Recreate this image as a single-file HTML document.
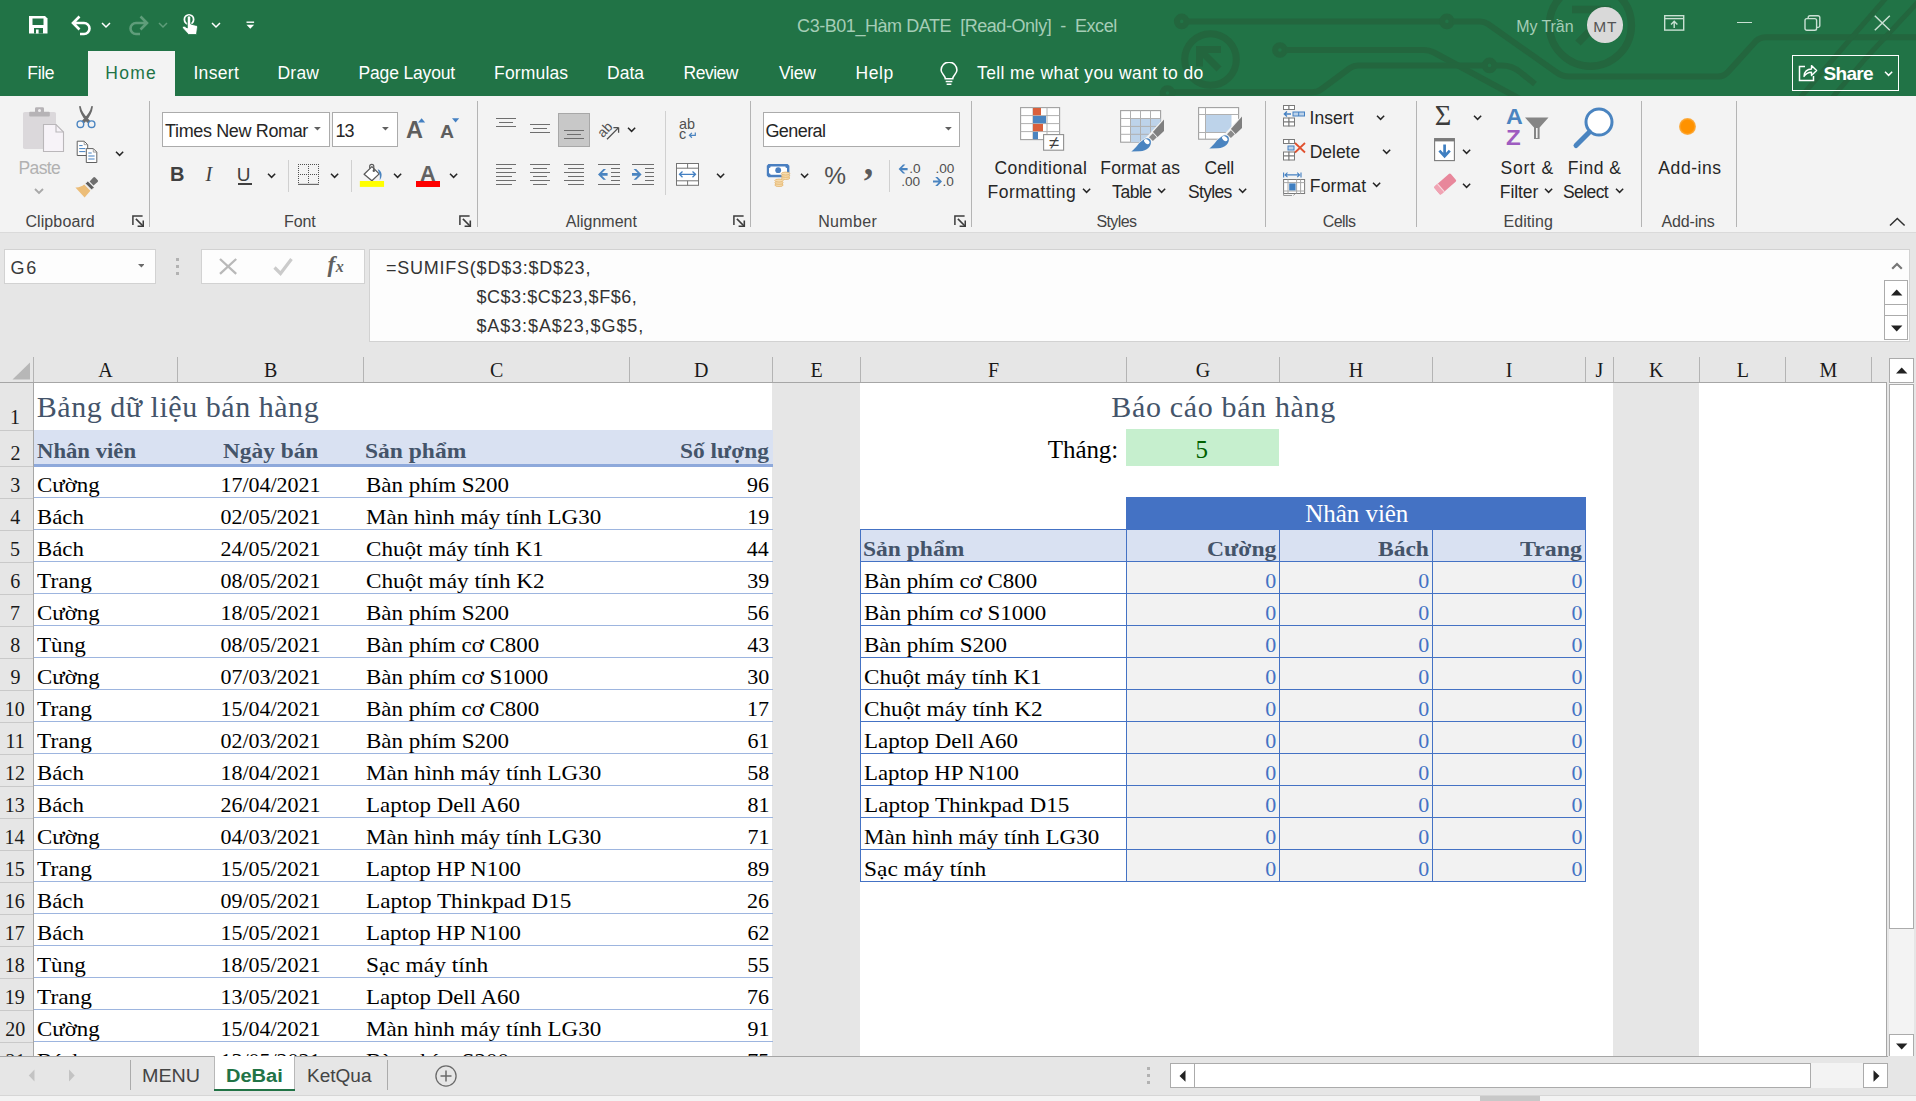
<!DOCTYPE html>
<html lang="vi"><head><meta charset="utf-8"><title>C3-B01_Hàm DATE [Read-Only] - Excel</title>
<style>
html,body{margin:0;padding:0;background:#e6e6e6;}
#app{position:relative;width:1916px;height:1101px;overflow:hidden;font-family:"Liberation Sans",sans-serif;background:#e6e6e6;}
.a{position:absolute;display:block;}
.t{position:absolute;white-space:pre;transform-origin:0 0;font-family:"Liberation Sans",sans-serif;}
.sf{font-family:"Liberation Serif",serif;}
svg text{white-space:pre;}
</style></head><body><div id="app">
<div class="a" style="left:0px;top:0px;width:1916px;height:96px;background:#217346;"></div>
<svg class="a" style="left:0px;top:0px;" width="1916" height="96" viewBox="0 0 1916 96"><g fill="none" stroke="#23663e" stroke-width="6" stroke-linejoin="round">
<circle cx="1181.7" cy="21.4" r="4.8"/><path d="M1187 21.4 H1441.5"/><circle cx="1446.9" cy="21.4" r="4.8"/><path d="M1452.3 21.4 H1480 Q1484 21.4 1488 24 L1556 72 Q1562 76.5 1569 76.5 H1718 Q1724 76.5 1728 72 L1756 41 Q1760 37.3 1766 37.3 H1916"/>
<circle cx="1279.9" cy="50" r="4.8"/><path d="M1285.3 50 H1424 Q1429 50 1434 52.5 L1520 99"/>
<circle cx="1489.5" cy="65.4" r="4.8"/><path d="M1484 65.4 H1358 Q1354 65.4 1350 68 L1321 89.5 Q1317 92.2 1312 92.2 H1173"/><path d="M1495 65.4 H1502 Q1512 65.4 1520 72 L1535 84"/>
<circle cx="1167.5" cy="93" r="4.8"/>
<circle cx="1210.5" cy="59.5" r="25.8" stroke-width="7"/><path d="M1199.5 66.5 V49.5 H1221 M1200 50 L1219 69" stroke-width="7" stroke-linejoin="miter"/>
<circle cx="1590.4" cy="25.2" r="41" stroke-width="7.4"/><path d="M1572 9.5 H1611 M1578 43 L1610 10" stroke-width="7.5"/>
<path d="M1886 -2 L1846 44 L1800 98 M1918 2 L1866 58 L1832 98" stroke-width="5"/>
</g></svg>
<svg class="a" style="left:28px;top:15px;" width="21" height="20" viewBox="0 0 21 20"><path d="M1 1 H17 L19.5 3.5 V18.5 H1 Z" fill="#ffffff"/><rect x="4.5" y="3.5" width="11" height="6.5" fill="#217346"/><rect x="6" y="13" width="9" height="5.5" fill="#217346"/><rect x="8" y="14.5" width="2.6" height="4" fill="#ffffff"/></svg>
<svg class="a" style="left:70px;top:14px;" width="23" height="22" viewBox="0 0 23 22"><path d="M9.5 2.5 L3 9 L9.5 15.5 M3.5 9 H14 a5.5 5.5 0 0 1 0 11 H10" fill="none" stroke="#ffffff" stroke-width="2.6" stroke-linejoin="miter"/></svg>
<svg class="a" style="left:100px;top:20.5px;" width="12" height="8" viewBox="0 0 12 8"><path d="M2 2.0 L6 6.0 L10 2.0" fill="none" stroke="#ffffff" stroke-width="1.5"/></svg>
<svg class="a" style="left:127px;top:14px;" width="23" height="22" viewBox="0 0 23 22"><path d="M13.5 2.5 L20 9 L13.5 15.5 M19.5 9 H9 a5.5 5.5 0 0 0 0 11 H13" fill="none" stroke="#5f9d7a" stroke-width="2.6"/></svg>
<svg class="a" style="left:157px;top:20.5px;" width="12" height="8" viewBox="0 0 12 8"><path d="M2 2.0 L6 6.0 L10 2.0" fill="none" stroke="#5f9d7a" stroke-width="1.5"/></svg>
<svg class="a" style="left:181px;top:13px;" width="18" height="23" viewBox="0 0 18 23"><circle cx="8" cy="6.5" r="4.6" fill="none" stroke="#ffffff" stroke-width="1.8"/><path d="M6.3 4.5 a1.7 1.7 0 0 1 3.4 0 V11 L15.5 12.5 a1.5 1.5 0 0 1 1 1.7 L15.5 21.5 H7.5 L2 15.5 a1.4 1.4 0 0 1 2 -2 L6.3 15 Z" fill="#ffffff" stroke="#217346" stroke-width="0.8"/></svg>
<svg class="a" style="left:209.5px;top:20.5px;" width="12" height="8" viewBox="0 0 12 8"><path d="M2 2.0 L6 6.0 L10 2.0" fill="none" stroke="#ffffff" stroke-width="1.5"/></svg>
<svg class="a" style="left:246px;top:21px;" width="9" height="9" viewBox="0 0 9 9"><rect x="0.5" y="0.5" width="7.6" height="1.4" fill="#ffffff"/><path d="M0.5 3.8 H8.1 L4.3 7.8 Z" fill="#ffffff"/></svg>
<span class="t" style="left:797.09px;top:17.00px;font-size:18px;line-height:18px;color:#a5cdb6;letter-spacing:-0.450px;">C3-B01_Hàm DATE  [Read-Only]  -  Excel</span>
<span class="t" style="left:1516.19px;top:19.00px;font-size:16px;line-height:16px;color:#a5cdb6;letter-spacing:-0.072px;">My Trần</span>
<div class="a" style="left:1587px;top:7px;width:35.6px;height:35.6px;border-radius:50%;background:#d9d9d9"></div>
<span class="t" style="left:1593.33px;top:19.00px;font-size:15.5px;line-height:15.5px;color:#555;letter-spacing:0.749px;">MT</span>
<svg class="a" style="left:1664px;top:15px;" width="21" height="16" viewBox="0 0 21 16"><rect x="0.7" y="0.7" width="19" height="14.4" fill="none" stroke="#c9e0d3" stroke-width="1.4"/><path d="M0.7 3.6 H19.7" stroke="#c9e0d3" stroke-width="1.4"/><path d="M10.2 13 V6.5 M7 9.5 L10.2 6.3 L13.4 9.5" fill="none" stroke="#c9e0d3" stroke-width="1.4"/></svg>
<div class="a" style="left:1736.5px;top:21.5px;width:15.5px;height:1.1px;background:#c9e0d3;"></div>
<svg class="a" style="left:1804px;top:15px;" width="17" height="16" viewBox="0 0 17 16"><rect x="1" y="3.6" width="11.6" height="11.6" rx="1.8" fill="none" stroke="#c9e0d3" stroke-width="1.4"/><path d="M4.2 3.4 V2.6 a1.8 1.8 0 0 1 1.8 -1.8 H14 a1.8 1.8 0 0 1 1.8 1.8 V10.6 a1.8 1.8 0 0 1 -1.8 1.8 H13" fill="none" stroke="#c9e0d3" stroke-width="1.4"/></svg>
<svg class="a" style="left:1874px;top:15px;" width="17" height="16" viewBox="0 0 17 16"><path d="M0.8 0.8 L15.8 15.2 M15.8 0.8 L0.8 15.2" stroke="#c9e0d3" stroke-width="1.5"/></svg>
<div class="a" style="left:88px;top:51px;width:87px;height:45px;background:#f3f3f3;"></div>
<span class="t" style="left:27.31px;top:65.00px;font-size:17.5px;line-height:17.5px;color:#ffffff;letter-spacing:-0.328px;">File</span>
<span class="t" style="left:105.31px;top:65.00px;font-size:17.5px;line-height:17.5px;color:#217346;letter-spacing:1.262px;">Home</span>
<span class="t" style="left:193.39px;top:65.00px;font-size:17.5px;line-height:17.5px;color:#ffffff;letter-spacing:0.346px;">Insert</span>
<span class="t" style="left:277.56px;top:65.00px;font-size:17.5px;line-height:17.5px;color:#ffffff;letter-spacing:0.186px;">Draw</span>
<span class="t" style="left:358.56px;top:65.00px;font-size:17.5px;line-height:17.5px;color:#ffffff;letter-spacing:-0.170px;">Page Layout</span>
<span class="t" style="left:494.06px;top:65.00px;font-size:17.5px;line-height:17.5px;color:#ffffff;letter-spacing:0.163px;">Formulas</span>
<span class="t" style="left:607.06px;top:65.00px;font-size:17.5px;line-height:17.5px;color:#ffffff;letter-spacing:-0.009px;">Data</span>
<span class="t" style="left:683.56px;top:65.00px;font-size:17.5px;line-height:17.5px;color:#ffffff;letter-spacing:-0.497px;">Review</span>
<span class="t" style="left:778.92px;top:65.00px;font-size:17.5px;line-height:17.5px;color:#ffffff;letter-spacing:-0.193px;">View</span>
<span class="t" style="left:855.56px;top:65.00px;font-size:17.5px;line-height:17.5px;color:#ffffff;letter-spacing:0.560px;">Help</span>
<span class="t" style="left:977.01px;top:65.00px;font-size:17.5px;line-height:17.5px;color:#ffffff;letter-spacing:0.400px;">Tell me what you want to do</span>
<svg class="a" style="left:938.5px;top:61.5px;" width="21" height="24" viewBox="0 0 22 25"><path d="M6.6 17.5 C6.6 14 2.2 12.6 2.2 8.4 a8.3 8.3 0 0 1 16.6 0 C18.8 12.6 14.4 14 14.4 17.5 Z" fill="none" stroke="#ffffff" stroke-width="1.6"/><path d="M7 20.3 H14 M8 23.2 H13" stroke="#ffffff" stroke-width="1.5"/></svg>
<div class="a" style="left:1792px;top:55px;width:104.6px;height:33.6px;border:1px solid #fff"></div>
<svg class="a" style="left:1797px;top:63px;" width="21" height="20" viewBox="0 0 21 20"><path d="M8 3.5 H2.5 V17.5 H16.5 V13" fill="none" stroke="#ffffff" stroke-width="1.5"/><path d="M7 13.5 C7 8.5 10.5 6 14.5 6 V2.6 L19.6 7.6 L14.5 12.5 V9.2 C11.5 9.2 9 10.2 7 13.5 Z" fill="none" stroke="#ffffff" stroke-width="1.4" stroke-linejoin="round"/></svg>
<span class="t" style="left:1823.45px;top:64.00px;font-size:19px;line-height:19px;color:#ffffff;letter-spacing:-0.652px;font-weight:700;">Share</span>
<svg class="a" style="left:1882.9px;top:70.4px;" width="11.2" height="7.2" viewBox="0 0 11.2 7.2"><path d="M2 1.8 L5.6 5.4 L9.2 1.8" fill="none" stroke="#ffffff" stroke-width="1.5"/></svg>
<div class="a" style="left:0px;top:96px;width:1916px;height:137px;background:#f3f3f3;"></div>
<div class="a" style="left:0px;top:232px;width:1916px;height:1.2px;background:#dadada;"></div>
<div class="a" style="left:149.2px;top:101px;width:1.2px;height:125.5px;background:#b4b4b4;"></div>
<div class="a" style="left:477px;top:101px;width:1.2px;height:125.5px;background:#b4b4b4;"></div>
<div class="a" style="left:750px;top:101px;width:1.2px;height:125.5px;background:#b4b4b4;"></div>
<div class="a" style="left:970.7px;top:101px;width:1.2px;height:125.5px;background:#b4b4b4;"></div>
<div class="a" style="left:1265px;top:101px;width:1.2px;height:125.5px;background:#b4b4b4;"></div>
<div class="a" style="left:1415.7px;top:101px;width:1.2px;height:125.5px;background:#b4b4b4;"></div>
<div class="a" style="left:1640.8px;top:101px;width:1.2px;height:125.5px;background:#b4b4b4;"></div>
<div class="a" style="left:1735.8px;top:101px;width:1.2px;height:125.5px;background:#b4b4b4;"></div>
<div class="a" style="left:288px;top:160px;width:1px;height:31.5px;background:#d0d0d0;"></div>
<div class="a" style="left:350.7px;top:160px;width:1px;height:31.5px;background:#d0d0d0;"></div>
<div class="a" style="left:664.7px;top:110.5px;width:1px;height:84.0px;background:#d0d0d0;"></div>
<div class="a" style="left:888.7px;top:160px;width:1px;height:32px;background:#d0d0d0;"></div>
<svg class="a" style="left:22px;top:106px;" width="43" height="47" viewBox="0 0 43 47"><rect x="1" y="6" width="33" height="37" rx="1.8" fill="#dbd8db"/><path d="M7.2 6.8 a1 1 0 0 1 1 -1 H13 V2.6 a1.4 1.4 0 0 1 1.4 -1.4 H20.6 a1.4 1.4 0 0 1 1.4 1.4 V5.8 H26.8 a1 1 0 0 1 1 1 V9.6 a1 1 0 0 1 -1 1 H8.2 a1 1 0 0 1 -1 -1 Z" fill="#b6b3b6"/><circle cx="17.5" cy="4.4" r="1.5" fill="#f0eef0"/><path d="M21.5 18.5 H34 L41.5 26 V45.5 H21.5 Z" fill="#f7f3f8" stroke="#bab7ba" stroke-width="1.1"/><path d="M34 18.5 V26 H41.5" fill="none" stroke="#bab7ba" stroke-width="1.1"/></svg>
<span class="t" style="left:18.56px;top:160.00px;font-size:17.5px;line-height:17.5px;color:#b1b1b1;letter-spacing:-0.634px;">Paste</span>
<svg class="a" style="left:33px;top:186.5px;" width="12" height="8" viewBox="0 0 12 8"><path d="M2 2.0 L6 6.0 L10 2.0" fill="none" stroke="#a9a9a9" stroke-width="1.9"/></svg>
<svg class="a" style="left:75px;top:106px;" width="22" height="23" viewBox="0 0 22 23"><path d="M5 0.8 C5.5 4 8 9 14.2 15.2 L12.6 16 C8.5 11 5.5 6 5 0.8 Z M17 0.8 C16.5 4 14 9 7.8 15.2 L9.4 16 C13.5 11 16.5 6 17 0.8 Z" fill="#6a6a6a" stroke="#6a6a6a" stroke-width="1.7" stroke-linejoin="round"/><circle cx="5.4" cy="18.2" r="3.3" fill="none" stroke="#4a84c0" stroke-width="1.4"/><circle cx="16.6" cy="18.2" r="3.3" fill="none" stroke="#4a84c0" stroke-width="1.4"/></svg>
<svg class="a" style="left:76px;top:140px;" width="22" height="24" viewBox="0 0 22 24"><path d="M1.2 1.2 H8.2 L11.7 4.7 V15.5 H1.2 Z" fill="#fff" stroke="#606060" stroke-width="1"/><path d="M8.2 1.2 V4.7 H11.7" fill="none" stroke="#8a8a8a" stroke-width="0.8"/><path d="M3.2 5.6 H6.6 M3.2 8.6 H9.4 M3.2 11.6 H9.4" stroke="#4480c2" stroke-width="1"/><path d="M10.3 8.6 H17.3 L20.8 12.1 V22.5 H10.3 Z" fill="#fff" stroke="#606060" stroke-width="1"/><path d="M17.3 8.6 V12.1 H20.8" fill="none" stroke="#8a8a8a" stroke-width="0.8"/><path d="M12.3 13 H15.7 M12.3 16 H18.6 M12.3 19 H18.6" stroke="#4480c2" stroke-width="1"/></svg>
<svg class="a" style="left:114.4px;top:149.9px;" width="11.2" height="7.2" viewBox="0 0 11.2 7.2"><path d="M2 1.8 L5.6 5.4 L9.2 1.8" fill="none" stroke="#262626" stroke-width="1.5"/></svg>
<svg class="a" style="left:74px;top:175px;" width="26" height="24" viewBox="0 0 26 24"><path d="M19.3 2.6 a1.3 1.3 0 0 1 1.9 0 L23.6 5 a1.3 1.3 0 0 1 0 1.9 L19.5 10.4 L15.6 6.4 Z" fill="#6e6e6e"/><path d="M13.8 6 L20.2 12.4 L17.6 15 L11.2 8.6 Z" fill="#5e5e5e" stroke="#f3f3f3" stroke-width="0.9"/><path d="M10.2 9.6 L16.4 15.8 L10.6 22.6 L1.4 12.4 C5 12.6 8 11.5 10.2 9.6 Z" fill="#ecbd78"/></svg>
<span class="t" style="left:25.39px;top:214.00px;font-size:16px;line-height:16px;color:#444444;letter-spacing:0.108px;">Clipboard</span>
<svg class="a" style="left:131.7px;top:215px;" width="12.5" height="12.5" viewBox="0 0 12.5 12.5"><path d="M0.9 10 V0.9 H10.6" fill="none" stroke="#3c3c3c" stroke-width="1.5"/><path d="M3.9 3.9 L11 11" fill="none" stroke="#3c3c3c" stroke-width="1.6"/><path d="M5.6 11.2 H11.3 V5.6" fill="none" stroke="#3c3c3c" stroke-width="1.6"/></svg>
<div class="a" style="left:162px;top:112px;width:166px;height:33px;border:1px solid #ababab;background:#fff"></div>
<div class="a" style="left:331.5px;top:112px;width:64.5px;height:33px;border:1px solid #ababab;background:#fff"></div>
<span class="t" style="left:165.10px;top:122.00px;font-size:18px;line-height:18px;color:#262626;letter-spacing:-0.367px;">Times New Romar</span>
<span class="t" style="left:335.43px;top:122.00px;font-size:18px;line-height:18px;color:#262626;letter-spacing:-0.857px;">13</span>
<svg class="a" style="left:314.1px;top:126.8px;" width="6.8" height="4.4" viewBox="0 0 6.8 4.4"><path d="M0 0 H6.8 L3.4 3.4 Z" fill="#606060"/></svg>
<svg class="a" style="left:382.3px;top:126.8px;" width="6.8" height="4.4" viewBox="0 0 6.8 4.4"><path d="M0 0 H6.8 L3.4 3.4 Z" fill="#606060"/></svg>
<span class="t" style="left:405.61px;top:119.00px;font-size:23px;line-height:23px;color:#5e5e5e;transform:scaleX(1.0239);font-weight:700;">A</span>
<svg class="a" style="left:418px;top:117.5px;" width="8" height="5" viewBox="0 0 8 5"><path d="M0 4.5 L3.6 0.3 L7.2 4.5 Z" fill="#4480c2"/></svg>
<span class="t" style="left:440.22px;top:123.00px;font-size:18.5px;line-height:18.5px;color:#5e5e5e;transform:scaleX(1.0474);font-weight:700;">A</span>
<svg class="a" style="left:452px;top:117.5px;" width="8" height="5" viewBox="0 0 8 5"><path d="M0 0.3 H7.2 L3.6 4.5 Z" fill="#4480c2"/></svg>
<span class="t" style="left:169.96px;top:164.00px;font-size:20px;line-height:20px;color:#404040;font-weight:700;">B</span>
<span class="t sf" style="left:205.58px;top:164.00px;font-size:20px;line-height:20px;color:#404040;font-style:italic;">I</span>
<span class="t" style="left:236.83px;top:165.00px;font-size:19px;line-height:19px;color:#404040;">U</span>
<div class="a" style="left:237.6px;top:183.2px;width:14px;height:1.4px;background:#404040;"></div>
<svg class="a" style="left:266.09999999999997px;top:172.4px;" width="11.2" height="7.2" viewBox="0 0 11.2 7.2"><path d="M2 1.8 L5.6 5.4 L9.2 1.8" fill="none" stroke="#262626" stroke-width="1.5"/></svg>
<svg class="a" style="left:298px;top:164px;" width="21" height="21" viewBox="0 0 21 21"><path d="M0 0.5 H21 M0 10.5 H21 M0.5 0 V21 M10.5 0 V21 M20.5 0 V21" stroke="#505050" stroke-width="1" stroke-dasharray="1 1" fill="none" shape-rendering="crispEdges"/><path d="M0 20.4 H21" stroke="#6a6a6a" stroke-width="1.2"/></svg>
<svg class="a" style="left:328.9px;top:172.4px;" width="11.2" height="7.2" viewBox="0 0 11.2 7.2"><path d="M2 1.8 L5.6 5.4 L9.2 1.8" fill="none" stroke="#262626" stroke-width="1.5"/></svg>
<svg class="a" style="left:359px;top:162px;" width="27" height="26" viewBox="0 0 27 26"><path d="M12.9 4.6 L20.2 11.9 L12.9 18.8 L5.1 12.3 Z" fill="#fff" stroke="#5a5a5a" stroke-width="1.3" stroke-linejoin="round"/><path d="M10.7 6.6 V4.4 a2.05 2.05 0 0 1 4.1 0 V8.2" fill="none" stroke="#5a5a5a" stroke-width="1.2"/><circle cx="14.8" cy="8.8" r="1.2" fill="#5a5a5a"/><path d="M18.7 7.3 C22 8.6 23.4 12 22.2 15.4 C21.8 16.6 21.2 17.6 20.7 18.2 C21 15.5 21 13.5 20.4 11.8 Z" fill="#4a84c0"/><rect x="0.85" y="19" width="24.2" height="5.9" fill="#ffff00"/></svg>
<svg class="a" style="left:391.9px;top:172.4px;" width="11.2" height="7.2" viewBox="0 0 11.2 7.2"><path d="M2 1.8 L5.6 5.4 L9.2 1.8" fill="none" stroke="#262626" stroke-width="1.5"/></svg>
<span class="t" style="left:419.86px;top:163.00px;font-size:22.5px;line-height:22.5px;color:#626262;transform:scaleX(0.9672);font-weight:700;">A</span>
<div class="a" style="left:415.9px;top:181px;width:24.1px;height:5.9px;background:#fe0000;"></div>
<svg class="a" style="left:447.59999999999997px;top:172.4px;" width="11.2" height="7.2" viewBox="0 0 11.2 7.2"><path d="M2 1.8 L5.6 5.4 L9.2 1.8" fill="none" stroke="#262626" stroke-width="1.5"/></svg>
<span class="t" style="left:283.99px;top:214.00px;font-size:16px;line-height:16px;color:#444444;letter-spacing:-0.128px;">Font</span>
<svg class="a" style="left:459.2px;top:215px;" width="12.5" height="12.5" viewBox="0 0 12.5 12.5"><path d="M0.9 10 V0.9 H10.6" fill="none" stroke="#3c3c3c" stroke-width="1.5"/><path d="M3.9 3.9 L11 11" fill="none" stroke="#3c3c3c" stroke-width="1.6"/><path d="M5.6 11.2 H11.3 V5.6" fill="none" stroke="#3c3c3c" stroke-width="1.6"/></svg>
<svg class="a" style="left:496px;top:118px;shape-rendering:crispEdges;" width="20" height="10" viewBox="0 0 20 10"><rect x="0" y="0" width="20" height="1" fill="#6e6e6e"/><rect x="3" y="4" width="14" height="1" fill="#6e6e6e"/><rect x="0" y="8" width="20" height="1" fill="#6e6e6e"/></svg>
<svg class="a" style="left:530px;top:124px;shape-rendering:crispEdges;" width="20" height="10" viewBox="0 0 20 10"><rect x="0" y="0" width="20" height="1" fill="#6e6e6e"/><rect x="3" y="4" width="14" height="1" fill="#6e6e6e"/><rect x="0" y="8" width="20" height="1" fill="#6e6e6e"/></svg>
<div class="a" style="left:558px;top:113px;width:30px;height:32px;border:1px solid #a8a8a8;background:#c8c8c8"></div>
<svg class="a" style="left:564px;top:130px;shape-rendering:crispEdges;" width="20" height="10" viewBox="0 0 20 10"><rect x="0" y="0" width="20" height="1" fill="#6e6e6e"/><rect x="3" y="4" width="14" height="1" fill="#6e6e6e"/><rect x="0" y="8" width="20" height="1" fill="#6e6e6e"/></svg>
<svg class="a" style="left:598px;top:118px;" width="23" height="23" viewBox="0 0 23 23"><g transform="rotate(-47 9 11)"><text x="-0.5" y="14.5" font-family="Liberation Sans, sans-serif" font-size="13.5" fill="#505050">ab</text></g><path d="M9 21.2 L20.6 9.6 M20.6 9.6 H15.4 M20.6 9.6 V14.8" stroke="#505050" stroke-width="1.3" fill="none"/></svg>
<svg class="a" style="left:625.9px;top:126.4px;" width="11.2" height="7.2" viewBox="0 0 11.2 7.2"><path d="M2 1.8 L5.6 5.4 L9.2 1.8" fill="none" stroke="#262626" stroke-width="1.5"/></svg>
<svg class="a" style="left:678px;top:118px;" width="22" height="23" viewBox="0 0 22 23"><text x="1" y="11.1" font-family="Liberation Sans, sans-serif" font-size="14.4" fill="#505050">ab</text><text x="1" y="20.9" font-family="Liberation Sans, sans-serif" font-size="14.4" fill="#505050">c</text><path d="M17.3 14.4 V17.3 H11.6 M13.9 14.9 L11.4 17.3 L13.9 19.7" stroke="#4a84c0" stroke-width="1.2" fill="none"/></svg>
<svg class="a" style="left:496px;top:164px;shape-rendering:crispEdges;" width="20" height="22" viewBox="0 0 20 22"><rect x="0" y="0" width="20" height="1" fill="#6e6e6e"/><rect x="0" y="4" width="16" height="1" fill="#6e6e6e"/><rect x="0" y="8" width="20" height="1" fill="#6e6e6e"/><rect x="0" y="12" width="16" height="1" fill="#6e6e6e"/><rect x="0" y="16" width="20" height="1" fill="#6e6e6e"/><rect x="0" y="20" width="16" height="1" fill="#6e6e6e"/></svg>
<svg class="a" style="left:530px;top:164px;shape-rendering:crispEdges;" width="20" height="22" viewBox="0 0 20 22"><rect x="0" y="0" width="20" height="1" fill="#6e6e6e"/><rect x="3" y="4" width="14" height="1" fill="#6e6e6e"/><rect x="0" y="8" width="20" height="1" fill="#6e6e6e"/><rect x="3" y="12" width="14" height="1" fill="#6e6e6e"/><rect x="0" y="16" width="20" height="1" fill="#6e6e6e"/><rect x="3" y="20" width="14" height="1" fill="#6e6e6e"/></svg>
<svg class="a" style="left:564px;top:164px;shape-rendering:crispEdges;" width="20" height="22" viewBox="0 0 20 22"><rect x="0" y="0" width="20" height="1" fill="#6e6e6e"/><rect x="4" y="4" width="16" height="1" fill="#6e6e6e"/><rect x="0" y="8" width="20" height="1" fill="#6e6e6e"/><rect x="4" y="12" width="16" height="1" fill="#6e6e6e"/><rect x="0" y="16" width="20" height="1" fill="#6e6e6e"/><rect x="4" y="20" width="16" height="1" fill="#6e6e6e"/></svg>
<svg class="a" style="left:598px;top:164px;" width="22" height="22" viewBox="0 0 22 22"><g shape-rendering="crispEdges" fill="#6e6e6e"><rect x="0" y="0" width="22" height="1"/><rect x="13" y="4" width="9" height="1"/><rect x="13" y="8" width="9" height="1"/><rect x="13" y="12" width="9" height="1"/><rect x="13" y="16" width="9" height="1"/><rect x="0" y="20" width="22" height="1"/></g><path d="M0 10.4 L5.4 5 H8 L4 9 H9.6 V11.8 H4 L8 15.8 H5.4 Z" fill="#4a84c0"/></svg>
<svg class="a" style="left:632px;top:164px;" width="22" height="22" viewBox="0 0 22 22"><g shape-rendering="crispEdges" fill="#6e6e6e"><rect x="0" y="0" width="22" height="1"/><rect x="13" y="4" width="9" height="1"/><rect x="13" y="8" width="9" height="1"/><rect x="13" y="12" width="9" height="1"/><rect x="13" y="16" width="9" height="1"/><rect x="0" y="20" width="22" height="1"/></g><path d="M9.6 10.4 L4.2 5 H1.6 L5.6 9 H0 V11.8 H5.6 L1.6 15.8 H4.2 Z" fill="#4a84c0"/></svg>
<svg class="a" style="left:676px;top:163px;" width="24" height="23" viewBox="0 0 24 23"><rect x="0.5" y="0.5" width="22" height="21.8" fill="#fff" stroke="#747474" stroke-width="1"/><path d="M0.5 5.2 H22.5 M0.5 17.8 H22.5 M11.6 0.5 V5.2 M11.6 17.8 V22.3" stroke="#747474" stroke-width="1"/><path d="M3.5 11.3 H19.5 M6.5 8.5 L3.5 11.3 L6.5 14.2 M16.5 8.5 L19.5 11.3 L16.5 14.2" stroke="#4480c2" stroke-width="1.3" fill="none"/></svg>
<svg class="a" style="left:715.4px;top:172.4px;" width="11.2" height="7.2" viewBox="0 0 11.2 7.2"><path d="M2 1.8 L5.6 5.4 L9.2 1.8" fill="none" stroke="#262626" stroke-width="1.5"/></svg>
<span class="t" style="left:565.77px;top:214.00px;font-size:16px;line-height:16px;color:#444444;letter-spacing:0.000px;">Alignment</span>
<svg class="a" style="left:733px;top:215px;" width="12.5" height="12.5" viewBox="0 0 12.5 12.5"><path d="M0.9 10 V0.9 H10.6" fill="none" stroke="#3c3c3c" stroke-width="1.5"/><path d="M3.9 3.9 L11 11" fill="none" stroke="#3c3c3c" stroke-width="1.6"/><path d="M5.6 11.2 H11.3 V5.6" fill="none" stroke="#3c3c3c" stroke-width="1.6"/></svg>
<div class="a" style="left:763px;top:112px;width:194.8px;height:33px;border:1px solid #ababab;background:#fff"></div>
<span class="t" style="left:765.39px;top:122.00px;font-size:18px;line-height:18px;color:#262626;letter-spacing:-0.570px;">General</span>
<svg class="a" style="left:944.9px;top:126.8px;" width="6.8" height="4.4" viewBox="0 0 6.8 4.4"><path d="M0 0 H6.8 L3.4 3.4 Z" fill="#606060"/></svg>
<svg class="a" style="left:766px;top:163px;" width="26" height="24" viewBox="0 0 26 24"><path d="M2.4 1 H21.6 L23.4 2.8 V12.4 L21.6 14.2 H2.4 L0.8 12.4 V2.8 Z" fill="#4a7fc0"/><path d="M4.6 3.4 H19.4 a1.6 1.6 0 0 0 1.6 1.6 V10.2 a1.6 1.6 0 0 0 -1.6 1.6 H4.6 a1.6 1.6 0 0 0 -1.6 -1.6 V5 a1.6 1.6 0 0 0 1.6 -1.6 Z" fill="#fff"/><circle cx="12.2" cy="7.2" r="2.9" fill="#4a7fc0"/><g fill="#f6dcb0" stroke="#e3b368" stroke-width="0.8"><ellipse cx="19.6" cy="15" rx="4.2" ry="1.5"/><ellipse cx="19.6" cy="12.8" rx="4.2" ry="1.5"/><ellipse cx="19.6" cy="10.6" rx="4.2" ry="1.5"/><ellipse cx="13" cy="22" rx="4.2" ry="1.5"/><ellipse cx="13" cy="19.8" rx="4.2" ry="1.5"/><ellipse cx="13" cy="17.6" rx="4.2" ry="1.5"/></g></svg>
<svg class="a" style="left:799.1999999999999px;top:172.4px;" width="11.2" height="7.2" viewBox="0 0 11.2 7.2"><path d="M2 1.8 L5.6 5.4 L9.2 1.8" fill="none" stroke="#262626" stroke-width="1.5"/></svg>
<span class="t" style="left:824.13px;top:164.00px;font-size:24.5px;line-height:24.5px;color:#505050;">%</span>
<span class="t sf" style="left:863.80px;top:143.00px;font-size:38px;line-height:38px;color:#5a5a5a;font-weight:700;">,</span>
<svg class="a" style="left:898px;top:163px;" width="24" height="24" viewBox="0 0 24 24"><path d="M0.6 6 L5 1.6 H7.4 L4 5 H9.6 V7.2 H4 L7.4 10.6 H5 Z" fill="#4a84c0"/><text x="11.2" y="10.4" font-family="Liberation Sans, sans-serif" font-size="13.6" fill="#505050">.0</text><text x="3.2" y="22.8" font-family="Liberation Sans, sans-serif" font-size="13.6" fill="#505050">.00</text></svg>
<svg class="a" style="left:932px;top:163px;" width="24" height="24" viewBox="0 0 24 24"><text x="3.4" y="10.4" font-family="Liberation Sans, sans-serif" font-size="13.6" fill="#505050">.00</text><path d="M10 18.4 L5.6 14 H3.2 L6.6 17.4 H1 V19.6 H6.6 L3.2 23 H5.6 Z" fill="#4a84c0"/><text x="10.6" y="22.8" font-family="Liberation Sans, sans-serif" font-size="13.6" fill="#505050">.0</text></svg>
<span class="t" style="left:818.19px;top:214.00px;font-size:16px;line-height:16px;color:#444444;letter-spacing:0.335px;">Number</span>
<svg class="a" style="left:953.6px;top:215px;" width="12.5" height="12.5" viewBox="0 0 12.5 12.5"><path d="M0.9 10 V0.9 H10.6" fill="none" stroke="#3c3c3c" stroke-width="1.5"/><path d="M3.9 3.9 L11 11" fill="none" stroke="#3c3c3c" stroke-width="1.6"/><path d="M5.6 11.2 H11.3 V5.6" fill="none" stroke="#3c3c3c" stroke-width="1.6"/></svg>
<svg class="a" style="left:1020px;top:107px;" width="45" height="45" viewBox="0 0 45 45"><rect x="0.6" y="0.6" width="39" height="32" fill="#fff" stroke="#a0a0a0" stroke-width="1.1"/><path d="M0.6 8.6 H39.6" stroke="#b0b0b0" stroke-width="1"/><path d="M0.6 16.6 H39.6" stroke="#b0b0b0" stroke-width="1"/><path d="M0.6 24.6 H39.6" stroke="#b0b0b0" stroke-width="1"/><path d="M13 0.6 V32.6" stroke="#b0b0b0" stroke-width="1"/><path d="M27 0.6 V32.6" stroke="#b0b0b0" stroke-width="1"/><rect x="13" y="1" width="8" height="7.2" fill="#d9603c"/><rect x="13" y="9" width="13" height="7.2" fill="#4a84c0"/><rect x="13" y="17" width="10" height="7.2" fill="#d9603c"/><rect x="13" y="25" width="5" height="7.2" fill="#4a84c0"/><rect x="23.6" y="27.6" width="20" height="15.6" fill="#fff" stroke="#909090" stroke-width="1.1"/><text x="33.8" y="41.6" text-anchor="middle" font-family="Liberation Sans, sans-serif" font-size="18.5" fill="#404040">≠</text></svg>
<svg class="a" style="left:1120px;top:110px;" width="47" height="43" viewBox="0 0 47 43"><rect x="0.6" y="0.6" width="40" height="31.6" fill="#fff" stroke="#a0a0a0" stroke-width="1.1"/><rect x="10.5" y="8.5" width="30" height="23.7" fill="#bdd3ea"/><path d="M0.6 8.5 H40.6" stroke="#b0b0b0" stroke-width="1"/><path d="M0.6 16.4 H40.6" stroke="#b0b0b0" stroke-width="1"/><path d="M0.6 24.3 H40.6" stroke="#b0b0b0" stroke-width="1"/><path d="M10.5 0.6 V32.2" stroke="#b0b0b0" stroke-width="1"/><path d="M20.5 0.6 V32.2" stroke="#b0b0b0" stroke-width="1"/><path d="M30.5 0.6 V32.2" stroke="#b0b0b0" stroke-width="1"/><path d="M42.3 10 L20.6 33.2 L24 44 H47 V5 Z" fill="#f3f3f3"/><path d="M44 9.6 V21 L37.4 27.2 L32.9 22 Z" fill="#7f7f7f" stroke="#f3f3f3" stroke-width="1.6" paint-order="stroke"/><path d="M32.9 23.3 L36.8 27.2 L32.9 31.1 L29 27.2 Z" fill="#8a8a8a" stroke="#f3f3f3" stroke-width="1.4" paint-order="stroke"/><path d="M24.4 29.1 C27 27.3 30.2 28.3 30.8 31 C31.8 36.2 27 41 20 41.3 L11.3 41.6 C16 38 18 34 20.5 32 Z" fill="#4a84c0" stroke="#f3f3f3" stroke-width="1.2" paint-order="stroke"/><ellipse cx="26.8" cy="31.6" rx="3.1" ry="2" transform="rotate(40 26.8 31.6)" fill="#fff"/></svg>
<svg class="a" style="left:1198px;top:107px;" width="47" height="43" viewBox="0 0 47 43"><rect x="0.6" y="0.6" width="40" height="31.6" fill="#fff" stroke="#a0a0a0" stroke-width="1.1"/><path d="M7.5 0.6 V32.2 M0.6 7.5 H40.6 M0.6 25.5 H40.6" stroke="#b0b0b0" stroke-width="1"/><rect x="8" y="8" width="25.5" height="17" fill="#bdd3ea"/><path d="M42.3 10 L20.6 33.2 L24 44 H47 V5 Z" fill="#f3f3f3"/><path d="M44 9.6 V21 L37.4 27.2 L32.9 22 Z" fill="#7f7f7f" stroke="#f3f3f3" stroke-width="1.6" paint-order="stroke"/><path d="M32.9 23.3 L36.8 27.2 L32.9 31.1 L29 27.2 Z" fill="#8a8a8a" stroke="#f3f3f3" stroke-width="1.4" paint-order="stroke"/><path d="M24.4 29.1 C27 27.3 30.2 28.3 30.8 31 C31.8 36.2 27 41 20 41.3 L11.3 41.6 C16 38 18 34 20.5 32 Z" fill="#4a84c0" stroke="#f3f3f3" stroke-width="1.2" paint-order="stroke"/><ellipse cx="26.8" cy="31.6" rx="3.1" ry="2" transform="rotate(40 26.8 31.6)" fill="#fff"/></svg>
<span class="t" style="left:994.41px;top:160.00px;font-size:17.5px;line-height:17.5px;color:#262626;letter-spacing:0.500px;">Conditional</span>
<span class="t" style="left:987.56px;top:184.00px;font-size:17.5px;line-height:17.5px;color:#262626;letter-spacing:0.493px;">Formatting</span>
<svg class="a" style="left:1080.8000000000002px;top:187.0px;" width="11.2" height="7.2" viewBox="0 0 11.2 7.2"><path d="M2 1.8 L5.6 5.4 L9.2 1.8" fill="none" stroke="#262626" stroke-width="1.5"/></svg>
<span class="t" style="left:1100.36px;top:160.00px;font-size:17.5px;line-height:17.5px;color:#262626;letter-spacing:0.101px;">Format as</span>
<span class="t" style="left:1112.11px;top:184.00px;font-size:17.5px;line-height:17.5px;color:#262626;letter-spacing:-0.466px;">Table</span>
<svg class="a" style="left:1156.4px;top:187.0px;" width="11.2" height="7.2" viewBox="0 0 11.2 7.2"><path d="M2 1.8 L5.6 5.4 L9.2 1.8" fill="none" stroke="#262626" stroke-width="1.5"/></svg>
<span class="t" style="left:1204.61px;top:160.00px;font-size:17.5px;line-height:17.5px;color:#262626;letter-spacing:-0.196px;">Cell</span>
<span class="t" style="left:1187.91px;top:184.00px;font-size:17.5px;line-height:17.5px;color:#262626;letter-spacing:-0.646px;">Styles</span>
<svg class="a" style="left:1237.4px;top:187.0px;" width="11.2" height="7.2" viewBox="0 0 11.2 7.2"><path d="M2 1.8 L5.6 5.4 L9.2 1.8" fill="none" stroke="#262626" stroke-width="1.5"/></svg>
<span class="t" style="left:1096.47px;top:214.00px;font-size:16px;line-height:16px;color:#444444;letter-spacing:-0.613px;">Styles</span>
<svg class="a" style="left:1283px;top:105px;" width="23" height="22" viewBox="0 0 23 22"><rect x="0.5" y="0.5" width="5.5" height="4" fill="#fff" stroke="#7a7a7a" stroke-width="1"/><rect x="6" y="0.5" width="5.5" height="4" fill="#fff" stroke="#7a7a7a" stroke-width="1"/><rect x="0.5" y="13" width="5.5" height="4" fill="#fff" stroke="#7a7a7a" stroke-width="1"/><rect x="6" y="13" width="5.5" height="4" fill="#fff" stroke="#7a7a7a" stroke-width="1"/><rect x="0.5" y="17" width="5.5" height="4" fill="#fff" stroke="#7a7a7a" stroke-width="1"/><rect x="6" y="17" width="5.5" height="4" fill="#fff" stroke="#7a7a7a" stroke-width="1"/><rect x="10" y="7" width="11.5" height="4" fill="#bdd3ea" stroke="#4480c2" stroke-width="1"/><path d="M15.7 7 V11" stroke="#4480c2" stroke-width="1"/><path d="M8 9 H1.5 M4 6.5 L1.3 9 L4 11.5" stroke="#4480c2" stroke-width="1.3" fill="none"/></svg>
<svg class="a" style="left:1283px;top:139px;" width="23" height="22" viewBox="0 0 23 22"><rect x="0.5" y="0.5" width="5.5" height="4" fill="#fff" stroke="#7a7a7a" stroke-width="1"/><rect x="6" y="0.5" width="5.5" height="4" fill="#fff" stroke="#7a7a7a" stroke-width="1"/><rect x="0.5" y="13" width="5.5" height="4" fill="#fff" stroke="#7a7a7a" stroke-width="1"/><rect x="6" y="13" width="5.5" height="4" fill="#fff" stroke="#7a7a7a" stroke-width="1"/><rect x="0.5" y="17" width="5.5" height="4" fill="#fff" stroke="#7a7a7a" stroke-width="1"/><rect x="6" y="17" width="5.5" height="4" fill="#fff" stroke="#7a7a7a" stroke-width="1"/><rect x="5" y="7" width="6" height="4" fill="#bdd3ea" stroke="#4480c2" stroke-width="1"/><path d="M12 4 L22 13.5 M22 4 L12 13.5" stroke="#e0502e" stroke-width="1.8"/></svg>
<svg class="a" style="left:1283px;top:171px;" width="23" height="26" viewBox="0 0 23 26"><path d="M0.6 1.4 V6.4 M18 1.4 V6.4 M2 3.9 H16.6 M4.5 1.7 L2 3.9 L4.5 6.1 M14.2 1.7 L16.6 3.9 L14.2 6.1" stroke="#4480c2" stroke-width="1.1" fill="none"/><rect x="0.6" y="8.5" width="21" height="14" fill="#fff" stroke="#7a7a7a" stroke-width="1"/><path d="M5 8.5 V22.5 M13.6 8.5 V22.5 M17.6 8.5 V22.5 M0.6 11.6 H21.6 M0.6 20 H21.6" stroke="#a8a8a8" stroke-width="1"/><rect x="6.2" y="12.4" width="6.4" height="7" fill="#3f7fc1"/><path d="M0.6 22.5 V24.5 H9 M10.5 24.5 L12 22.8" stroke="#9a9a9a" stroke-width="1" fill="none"/></svg>
<span class="t" style="left:1309.59px;top:110.00px;font-size:17.5px;line-height:17.5px;color:#262626;letter-spacing:0.036px;">Insert</span>
<svg class="a" style="left:1375.4px;top:114.2px;" width="11.2" height="7.2" viewBox="0 0 11.2 7.2"><path d="M2 1.8 L5.6 5.4 L9.2 1.8" fill="none" stroke="#262626" stroke-width="1.5"/></svg>
<span class="t" style="left:1309.76px;top:144.00px;font-size:17.5px;line-height:17.5px;color:#262626;letter-spacing:-0.034px;">Delete</span>
<svg class="a" style="left:1381.4px;top:148.4px;" width="11.2" height="7.2" viewBox="0 0 11.2 7.2"><path d="M2 1.8 L5.6 5.4 L9.2 1.8" fill="none" stroke="#262626" stroke-width="1.5"/></svg>
<span class="t" style="left:1309.76px;top:178.00px;font-size:17.5px;line-height:17.5px;color:#262626;letter-spacing:0.189px;">Format</span>
<svg class="a" style="left:1371.4px;top:181.0px;" width="11.2" height="7.2" viewBox="0 0 11.2 7.2"><path d="M2 1.8 L5.6 5.4 L9.2 1.8" fill="none" stroke="#262626" stroke-width="1.5"/></svg>
<span class="t" style="left:1322.79px;top:214.00px;font-size:16px;line-height:16px;color:#444444;letter-spacing:-0.593px;">Cells</span>
<span class="t sf" style="left:1434.69px;top:102.00px;font-size:28.5px;line-height:28.5px;color:#3c3c3c;">Σ</span>
<svg class="a" style="left:1472.4px;top:113.80000000000001px;" width="11.2" height="7.2" viewBox="0 0 11.2 7.2"><path d="M2 1.8 L5.6 5.4 L9.2 1.8" fill="none" stroke="#262626" stroke-width="1.5"/></svg>
<svg class="a" style="left:1433.5px;top:137.5px;" width="22" height="24" viewBox="0 0 22 24"><rect x="0.6" y="0.6" width="19.8" height="22" fill="#fff" stroke="#7a7a7a" stroke-width="1.1"/><rect x="0.6" y="0.6" width="19.8" height="2.8" fill="#7a7a7a"/><path d="M10.6 6.5 V18 M5.4 12.6 L10.6 18.2 L15.8 12.6" stroke="#3f7fc1" stroke-width="2.7" fill="none"/></svg>
<svg class="a" style="left:1461.4px;top:147.70000000000002px;" width="11.2" height="7.2" viewBox="0 0 11.2 7.2"><path d="M2 1.8 L5.6 5.4 L9.2 1.8" fill="none" stroke="#262626" stroke-width="1.5"/></svg>
<svg class="a" style="left:1432px;top:172px;" width="26" height="24" viewBox="0 0 26 24"><g transform="translate(13.2 12) rotate(-41)"><rect x="-10.8" y="-5.2" width="21.6" height="10.4" rx="1.5" fill="#e8879b"/><rect x="-10.8" y="-5.2" width="5.4" height="10.4" rx="1.5" fill="#f0a3b3"/><rect x="-6.2" y="-5.2" width="1" height="10.4" fill="#f7d9df"/></g></svg>
<svg class="a" style="left:1461.4px;top:181.70000000000002px;" width="11.2" height="7.2" viewBox="0 0 11.2 7.2"><path d="M2 1.8 L5.6 5.4 L9.2 1.8" fill="none" stroke="#262626" stroke-width="1.5"/></svg>
<span class="t" style="left:1505.72px;top:106.00px;font-size:22px;line-height:22px;color:#4a84c0;transform:scaleX(1.0569);font-weight:700;">A</span>
<span class="t" style="left:1506.18px;top:127.00px;font-size:22.5px;line-height:22.5px;color:#9e5cc0;transform:scaleX(1.0705);font-weight:700;">Z</span>
<svg class="a" style="left:1524px;top:116px;" width="26" height="24" viewBox="0 0 26 24"><path d="M1 1.5 H24.5 L15.6 11.5 V23 H10 V11.5 Z" fill="#858585"/><path d="M12.8 12 V22" stroke="#f3f3f3" stroke-width="1.6"/></svg>
<svg class="a" style="left:1572px;top:106px;" width="44" height="44" viewBox="0 0 44 44"><circle cx="27" cy="16" r="13" fill="#fff" stroke="#4a84c0" stroke-width="3"/><path d="M17.5 26 L4 39.5" stroke="#4a84c0" stroke-width="5" stroke-linecap="round"/></svg>
<span class="t" style="left:1500.51px;top:160.00px;font-size:17.5px;line-height:17.5px;color:#262626;letter-spacing:0.788px;">Sort &amp;</span>
<span class="t" style="left:1499.86px;top:184.00px;font-size:17.5px;line-height:17.5px;color:#262626;letter-spacing:-0.092px;">Filter</span>
<svg class="a" style="left:1543.0px;top:187.0px;" width="11.2" height="7.2" viewBox="0 0 11.2 7.2"><path d="M2 1.8 L5.6 5.4 L9.2 1.8" fill="none" stroke="#262626" stroke-width="1.5"/></svg>
<span class="t" style="left:1567.76px;top:160.00px;font-size:17.5px;line-height:17.5px;color:#262626;letter-spacing:0.527px;">Find &amp;</span>
<span class="t" style="left:1563.01px;top:184.00px;font-size:17.5px;line-height:17.5px;color:#262626;letter-spacing:-0.583px;">Select</span>
<svg class="a" style="left:1613.8000000000002px;top:187.0px;" width="11.2" height="7.2" viewBox="0 0 11.2 7.2"><path d="M2 1.8 L5.6 5.4 L9.2 1.8" fill="none" stroke="#262626" stroke-width="1.5"/></svg>
<span class="t" style="left:1503.39px;top:214.00px;font-size:16px;line-height:16px;color:#444444;letter-spacing:0.104px;">Editing</span>
<div class="a" style="left:1678.5px;top:117.5px;width:17px;height:17px;border-radius:50%;background:radial-gradient(circle,#ff9200 0%,#ff9200 52%,rgba(255,146,0,0.55) 76%,rgba(255,146,0,0) 100%)"></div>
<span class="t" style="left:1658.37px;top:160.00px;font-size:17.5px;line-height:17.5px;color:#262626;letter-spacing:0.556px;">Add-ins</span>
<span class="t" style="left:1661.57px;top:214.00px;font-size:16px;line-height:16px;color:#444444;letter-spacing:-0.173px;">Add-ins</span>
<svg class="a" style="left:1889px;top:217px;" width="17" height="10" viewBox="0 0 17 10"><path d="M1 8.5 L8.3 1.5 L15.6 8.5" fill="none" stroke="#303030" stroke-width="1.5"/></svg>
<div class="a" style="left:0px;top:233px;width:1916px;height:124px;background:#e6e6e6;"></div>
<div class="a" style="left:4px;top:249px;width:151.5px;height:34.5px;background:#fdfdfd;border:1px solid #d2d2d2;background:#fdfdfd;box-sizing:border-box;"></div>
<span class="t" style="left:10.39px;top:259.00px;font-size:18px;line-height:18px;color:#3a3a3a;letter-spacing:1.886px;">G6</span>
<svg class="a" style="left:137.6px;top:264.3px;" width="6.8" height="4.4" viewBox="0 0 6.8 4.4"><path d="M0 0 H6.8 L3.4 3.4 Z" fill="#6a6a6a"/></svg>
<div class="a" style="left:176px;top:258px;width:3px;height:3px;background:#b2b2b2;"></div>
<div class="a" style="left:176px;top:265px;width:3px;height:3px;background:#b2b2b2;"></div>
<div class="a" style="left:176px;top:272px;width:3px;height:3px;background:#b2b2b2;"></div>
<div class="a" style="left:201px;top:249px;width:164px;height:34.5px;background:#fdfdfd;border:1px solid #d2d2d2;background:#fdfdfd;box-sizing:border-box;"></div>
<svg class="a" style="left:219px;top:258px;" width="18.5" height="17" viewBox="0 0 18.5 17"><path d="M1 1 L17.2 15.8 M17.2 1 L1 15.8" stroke="#b9b9b9" stroke-width="2.3"/></svg>
<svg class="a" style="left:273px;top:257px;" width="20" height="19" viewBox="0 0 20 19"><path d="M1.5 10.5 L7.5 16.5 L18.5 2" stroke="#cbcbcb" stroke-width="3.2" fill="none"/></svg>
<span class="t sf" style="left:327.60px;top:253.00px;font-size:23px;line-height:23px;color:#606060;font-weight:700;font-style:italic;">f</span>
<span class="t sf" style="left:335.80px;top:259.00px;font-size:16px;line-height:16px;color:#606060;font-weight:700;font-style:italic;">x</span>
<div class="a" style="left:369px;top:249px;width:1541px;height:92.5px;background:#fdfdfd;border:1px solid #d2d2d2;background:#fdfdfd;box-sizing:border-box;"></div>
<span class="t" style="left:385.92px;top:259.00px;font-size:18px;line-height:18px;color:#333;letter-spacing:0.773px;">=SUMIFS($D$3:$D$23,</span>
<span class="t" style="left:476.41px;top:288.00px;font-size:18px;line-height:18px;color:#333;letter-spacing:0.555px;">$C$3:$C$23,$F$6,</span>
<span class="t" style="left:476.41px;top:317.00px;font-size:18px;line-height:18px;color:#333;letter-spacing:0.913px;">$A$3:$A$23,$G$5,</span>
<svg class="a" style="left:1890.5px;top:261.5px;" width="12" height="8" viewBox="0 0 12 8"><path d="M1.2 6.8 L6 2 L10.8 6.8" fill="none" stroke="#777" stroke-width="2.2"/></svg>
<div class="a" style="left:1884px;top:280px;width:24px;height:25px;background:#fff;border:1px solid #ababab;background:#fff;box-sizing:border-box;"></div>
<div class="a" style="left:1884px;top:304px;width:24px;height:11.5px;background:#fff;border:1px solid #ababab;background:#fff;box-sizing:border-box;"></div>
<div class="a" style="left:1884px;top:314.6px;width:24px;height:25px;background:#fff;border:1px solid #ababab;background:#fff;box-sizing:border-box;"></div>
<svg class="a" style="left:1890.5px;top:289px;" width="12" height="7" viewBox="0 0 12 7"><path d="M0 6.5 L5.7 0.5 L11.4 6.5 Z" fill="#222"/></svg>
<svg class="a" style="left:1890.5px;top:324.5px;" width="12" height="7" viewBox="0 0 12 7"><path d="M0 0.5 H11.4 L5.7 6.5 Z" fill="#222"/></svg>
<div class="a" style="left:0;top:357px;width:1887px;height:699.5px;overflow:hidden"><div class="a" style="left:0px;top:0px;width:1887px;height:700px;background:#fff;"></div>
<div class="a" style="left:0px;top:0px;width:1887px;height:25px;background:#e6e6e6;"></div>
<div class="a" style="left:0px;top:25px;width:33px;height:675px;background:#e6e6e6;"></div>
<div class="a" style="left:772px;top:26px;width:88px;height:675px;background:#e6e6e6;"></div>
<div class="a" style="left:1613px;top:26px;width:86px;height:675px;background:#e6e6e6;"></div>
<span class="t sf" style="left:98.25px;top:3.00px;font-size:20px;line-height:20px;color:#1a1a1a;">A</span>
<div class="a" style="left:177px;top:0px;width:1px;height:25px;background:#b4b4b4;"></div>
<span class="t sf" style="left:264.03px;top:3.00px;font-size:20px;line-height:20px;color:#1a1a1a;">B</span>
<div class="a" style="left:363px;top:0px;width:1px;height:25px;background:#b4b4b4;"></div>
<span class="t sf" style="left:489.97px;top:3.00px;font-size:20px;line-height:20px;color:#1a1a1a;">C</span>
<div class="a" style="left:629px;top:0px;width:1px;height:25px;background:#b4b4b4;"></div>
<span class="t sf" style="left:693.89px;top:3.00px;font-size:20px;line-height:20px;color:#1a1a1a;">D</span>
<div class="a" style="left:772px;top:0px;width:1px;height:25px;background:#b4b4b4;"></div>
<span class="t sf" style="left:810.60px;top:3.00px;font-size:20px;line-height:20px;color:#1a1a1a;">E</span>
<div class="a" style="left:860px;top:0px;width:1px;height:25px;background:#b4b4b4;"></div>
<span class="t sf" style="left:988.01px;top:3.00px;font-size:20px;line-height:20px;color:#1a1a1a;">F</span>
<div class="a" style="left:1126px;top:0px;width:1px;height:25px;background:#b4b4b4;"></div>
<span class="t sf" style="left:1195.68px;top:3.00px;font-size:20px;line-height:20px;color:#1a1a1a;">G</span>
<div class="a" style="left:1279px;top:0px;width:1px;height:25px;background:#b4b4b4;"></div>
<span class="t sf" style="left:1348.78px;top:3.00px;font-size:20px;line-height:20px;color:#1a1a1a;">H</span>
<div class="a" style="left:1432px;top:0px;width:1px;height:25px;background:#b4b4b4;"></div>
<span class="t sf" style="left:1505.66px;top:3.00px;font-size:20px;line-height:20px;color:#1a1a1a;">I</span>
<div class="a" style="left:1585px;top:0px;width:1px;height:25px;background:#b4b4b4;"></div>
<span class="t sf" style="left:1595.61px;top:3.00px;font-size:20px;line-height:20px;color:#1a1a1a;">J</span>
<div class="a" style="left:1613px;top:0px;width:1px;height:25px;background:#b4b4b4;"></div>
<span class="t sf" style="left:1649.09px;top:3.00px;font-size:20px;line-height:20px;color:#1a1a1a;">K</span>
<div class="a" style="left:1699px;top:0px;width:1px;height:25px;background:#b4b4b4;"></div>
<span class="t sf" style="left:1736.70px;top:3.00px;font-size:20px;line-height:20px;color:#1a1a1a;">L</span>
<div class="a" style="left:1785px;top:0px;width:1px;height:25px;background:#b4b4b4;"></div>
<span class="t sf" style="left:1819.61px;top:3.00px;font-size:20px;line-height:20px;color:#1a1a1a;">M</span>
<div class="a" style="left:1871px;top:0px;width:1px;height:25px;background:#b4b4b4;"></div>
<div class="a" style="left:33px;top:0px;width:1px;height:25px;background:#b4b4b4;"></div>
<svg class="a" style="left:12px;top:4.5px;" width="19" height="18" viewBox="0 0 19 18"><path d="M18 0.5 V17.5 H0.5 Z" fill="#b7b7b7"/></svg>
<div class="a" style="left:0px;top:25px;width:1887px;height:1.2px;background:#a6a6a6;"></div>
<div class="a" style="left:32.6px;top:25px;width:1.2px;height:675px;background:#a6a6a6;"></div>
<div class="a" style="left:0px;top:72.5px;width:33px;height:1px;background:#c9c9c9;"></div>
<span class="t sf" style="left:10.02px;top:50.00px;font-size:20px;line-height:20px;color:#1a1a1a;">1</span>
<div class="a" style="left:0px;top:108.5px;width:33px;height:1px;background:#c9c9c9;"></div>
<span class="t sf" style="left:10.41px;top:86.00px;font-size:20px;line-height:20px;color:#1a1a1a;">2</span>
<div class="a" style="left:0px;top:140.5px;width:33px;height:1px;background:#c9c9c9;"></div>
<span class="t sf" style="left:10.21px;top:118.00px;font-size:20px;line-height:20px;color:#1a1a1a;">3</span>
<div class="a" style="left:0px;top:172.5px;width:33px;height:1px;background:#c9c9c9;"></div>
<span class="t sf" style="left:10.26px;top:150.00px;font-size:20px;line-height:20px;color:#1a1a1a;">4</span>
<div class="a" style="left:0px;top:204.5px;width:33px;height:1px;background:#c9c9c9;"></div>
<span class="t sf" style="left:10.11px;top:182.00px;font-size:20px;line-height:20px;color:#1a1a1a;">5</span>
<div class="a" style="left:0px;top:236.5px;width:33px;height:1px;background:#c9c9c9;"></div>
<span class="t sf" style="left:10.17px;top:214.00px;font-size:20px;line-height:20px;color:#1a1a1a;">6</span>
<div class="a" style="left:0px;top:268.5px;width:33px;height:1px;background:#c9c9c9;"></div>
<span class="t sf" style="left:9.93px;top:246.00px;font-size:20px;line-height:20px;color:#1a1a1a;">7</span>
<div class="a" style="left:0px;top:300.5px;width:33px;height:1px;background:#c9c9c9;"></div>
<span class="t sf" style="left:10.30px;top:278.00px;font-size:20px;line-height:20px;color:#1a1a1a;">8</span>
<div class="a" style="left:0px;top:332.5px;width:33px;height:1px;background:#c9c9c9;"></div>
<span class="t sf" style="left:10.39px;top:310.00px;font-size:20px;line-height:20px;color:#1a1a1a;">9</span>
<div class="a" style="left:0px;top:364.5px;width:33px;height:1px;background:#c9c9c9;"></div>
<span class="t sf" style="left:4.80px;top:342.00px;font-size:20px;line-height:20px;color:#1a1a1a;">10</span>
<div class="a" style="left:0px;top:396.5px;width:33px;height:1px;background:#c9c9c9;"></div>
<span class="t sf" style="left:5.39px;top:374.00px;font-size:20px;line-height:20px;color:#1a1a1a;">11</span>
<div class="a" style="left:0px;top:428.5px;width:33px;height:1px;background:#c9c9c9;"></div>
<span class="t sf" style="left:4.97px;top:406.00px;font-size:20px;line-height:20px;color:#1a1a1a;">12</span>
<div class="a" style="left:0px;top:460.5px;width:33px;height:1px;background:#c9c9c9;"></div>
<span class="t sf" style="left:4.81px;top:438.00px;font-size:20px;line-height:20px;color:#1a1a1a;">13</span>
<div class="a" style="left:0px;top:492.5px;width:33px;height:1px;background:#c9c9c9;"></div>
<span class="t sf" style="left:4.58px;top:470.00px;font-size:20px;line-height:20px;color:#1a1a1a;">14</span>
<div class="a" style="left:0px;top:524.5px;width:33px;height:1px;background:#c9c9c9;"></div>
<span class="t sf" style="left:4.81px;top:502.00px;font-size:20px;line-height:20px;color:#1a1a1a;">15</span>
<div class="a" style="left:0px;top:556.5px;width:33px;height:1px;background:#c9c9c9;"></div>
<span class="t sf" style="left:4.72px;top:534.00px;font-size:20px;line-height:20px;color:#1a1a1a;">16</span>
<div class="a" style="left:0px;top:588.5px;width:33px;height:1px;background:#c9c9c9;"></div>
<span class="t sf" style="left:4.71px;top:566.00px;font-size:20px;line-height:20px;color:#1a1a1a;">17</span>
<div class="a" style="left:0px;top:620.5px;width:33px;height:1px;background:#c9c9c9;"></div>
<span class="t sf" style="left:4.80px;top:598.00px;font-size:20px;line-height:20px;color:#1a1a1a;">18</span>
<div class="a" style="left:0px;top:652.5px;width:33px;height:1px;background:#c9c9c9;"></div>
<span class="t sf" style="left:4.83px;top:630.00px;font-size:20px;line-height:20px;color:#1a1a1a;">19</span>
<div class="a" style="left:0px;top:684.5px;width:33px;height:1px;background:#c9c9c9;"></div>
<span class="t sf" style="left:5.24px;top:662.00px;font-size:20px;line-height:20px;color:#1a1a1a;">20</span>
<div class="a" style="left:0px;top:716.5px;width:33px;height:1px;background:#c9c9c9;"></div>
<span class="t sf" style="left:5.46px;top:694.00px;font-size:20px;line-height:20px;color:#1a1a1a;">21</span>
<div class="a" style="left:0px;top:748.5px;width:33px;height:1px;background:#c9c9c9;"></div>
<span class="t sf" style="left:5.41px;top:726.00px;font-size:20px;line-height:20px;color:#1a1a1a;">22</span>
<span class="t sf" style="left:36.74px;top:35.00px;font-size:30px;line-height:30px;color:#44546a;letter-spacing:0.536px;">Bảng dữ liệu bán hàng</span>
<div class="a" style="left:33.6px;top:72.5px;width:739px;height:35px;background:#d9e1f2;"></div>
<div class="a" style="left:33.6px;top:107.19999999999999px;width:739px;height:2.5px;background:#8ea9db;"></div>
<span class="t sf" style="left:37.17px;top:83.00px;font-size:22px;line-height:22px;color:#44546a;transform:scaleX(1.0319);font-weight:700;">Nhân viên</span>
<span class="t sf" style="left:222.51px;top:83.00px;font-size:22px;line-height:22px;color:#44546a;transform:scaleX(1.0606);font-weight:700;">Ngày bán</span>
<span class="t sf" style="left:365.25px;top:83.00px;font-size:22px;line-height:22px;color:#44546a;transform:scaleX(1.0685);font-weight:700;">Sản phẩm</span>
<span class="t sf" style="left:680.15px;top:83.00px;font-size:22px;line-height:22px;color:#44546a;transform:scaleX(1.0648);font-weight:700;">Số lượng</span>
<div class="a" style="left:33.6px;top:140px;width:739px;height:1px;background:#9db5df;"></div>
<span class="t sf" style="left:37.00px;top:117.00px;font-size:22px;line-height:22px;color:#000;transform:scaleX(1.0406);">Cường</span>
<span class="t sf" style="left:220.40px;top:117.00px;font-size:22px;line-height:22px;color:#000;">17/04/2021</span>
<span class="t sf" style="left:366.30px;top:117.00px;font-size:22px;line-height:22px;color:#000;transform:scaleX(1.0448);">Bàn phím S200</span>
<span class="t sf" style="left:746.96px;top:117.00px;font-size:22px;line-height:22px;color:#000;">96</span>
<div class="a" style="left:33.6px;top:172px;width:739px;height:1px;background:#9db5df;"></div>
<span class="t sf" style="left:37.00px;top:149.00px;font-size:22px;line-height:22px;color:#000;transform:scaleX(1.0365);">Bách</span>
<span class="t sf" style="left:220.40px;top:149.00px;font-size:22px;line-height:22px;color:#000;">02/05/2021</span>
<span class="t sf" style="left:366.30px;top:149.00px;font-size:22px;line-height:22px;color:#000;transform:scaleX(1.0461);">Màn hình máy tính LG30</span>
<span class="t sf" style="left:747.20px;top:149.00px;font-size:22px;line-height:22px;color:#000;">19</span>
<div class="a" style="left:33.6px;top:204px;width:739px;height:1px;background:#9db5df;"></div>
<span class="t sf" style="left:37.00px;top:181.00px;font-size:22px;line-height:22px;color:#000;transform:scaleX(1.0365);">Bách</span>
<span class="t sf" style="left:220.40px;top:181.00px;font-size:22px;line-height:22px;color:#000;">24/05/2021</span>
<span class="t sf" style="left:366.30px;top:181.00px;font-size:22px;line-height:22px;color:#000;transform:scaleX(1.0494);">Chuột máy tính K1</span>
<span class="t sf" style="left:746.64px;top:181.00px;font-size:22px;line-height:22px;color:#000;">44</span>
<div class="a" style="left:33.6px;top:236px;width:739px;height:1px;background:#9db5df;"></div>
<span class="t sf" style="left:37.00px;top:213.00px;font-size:22px;line-height:22px;color:#000;transform:scaleX(1.0601);">Trang</span>
<span class="t sf" style="left:220.40px;top:213.00px;font-size:22px;line-height:22px;color:#000;">08/05/2021</span>
<span class="t sf" style="left:366.30px;top:213.00px;font-size:22px;line-height:22px;color:#000;transform:scaleX(1.0559);">Chuột máy tính K2</span>
<span class="t sf" style="left:747.20px;top:213.00px;font-size:22px;line-height:22px;color:#000;">39</span>
<div class="a" style="left:33.6px;top:268px;width:739px;height:1px;background:#9db5df;"></div>
<span class="t sf" style="left:37.00px;top:245.00px;font-size:22px;line-height:22px;color:#000;transform:scaleX(1.0406);">Cường</span>
<span class="t sf" style="left:220.40px;top:245.00px;font-size:22px;line-height:22px;color:#000;">18/05/2021</span>
<span class="t sf" style="left:366.30px;top:245.00px;font-size:22px;line-height:22px;color:#000;transform:scaleX(1.0448);">Bàn phím S200</span>
<span class="t sf" style="left:746.96px;top:245.00px;font-size:22px;line-height:22px;color:#000;">56</span>
<div class="a" style="left:33.6px;top:300px;width:739px;height:1px;background:#9db5df;"></div>
<span class="t sf" style="left:37.00px;top:277.00px;font-size:22px;line-height:22px;color:#000;transform:scaleX(1.0500);">Tùng</span>
<span class="t sf" style="left:220.40px;top:277.00px;font-size:22px;line-height:22px;color:#000;">08/05/2021</span>
<span class="t sf" style="left:366.30px;top:277.00px;font-size:22px;line-height:22px;color:#000;transform:scaleX(1.0415);">Bàn phím cơ C800</span>
<span class="t sf" style="left:747.16px;top:277.00px;font-size:22px;line-height:22px;color:#000;">43</span>
<div class="a" style="left:33.6px;top:332px;width:739px;height:1px;background:#9db5df;"></div>
<span class="t sf" style="left:37.00px;top:309.00px;font-size:22px;line-height:22px;color:#000;transform:scaleX(1.0406);">Cường</span>
<span class="t sf" style="left:220.40px;top:309.00px;font-size:22px;line-height:22px;color:#000;">07/03/2021</span>
<span class="t sf" style="left:366.30px;top:309.00px;font-size:22px;line-height:22px;color:#000;transform:scaleX(1.0425);">Bàn phím cơ S1000</span>
<span class="t sf" style="left:747.14px;top:309.00px;font-size:22px;line-height:22px;color:#000;">30</span>
<div class="a" style="left:33.6px;top:364px;width:739px;height:1px;background:#9db5df;"></div>
<span class="t sf" style="left:37.00px;top:341.00px;font-size:22px;line-height:22px;color:#000;transform:scaleX(1.0601);">Trang</span>
<span class="t sf" style="left:220.40px;top:341.00px;font-size:22px;line-height:22px;color:#000;">15/04/2021</span>
<span class="t sf" style="left:366.30px;top:341.00px;font-size:22px;line-height:22px;color:#000;transform:scaleX(1.0415);">Bàn phím cơ C800</span>
<span class="t sf" style="left:746.93px;top:341.00px;font-size:22px;line-height:22px;color:#000;">17</span>
<div class="a" style="left:33.6px;top:396px;width:739px;height:1px;background:#9db5df;"></div>
<span class="t sf" style="left:37.00px;top:373.00px;font-size:22px;line-height:22px;color:#000;transform:scaleX(1.0601);">Trang</span>
<span class="t sf" style="left:220.40px;top:373.00px;font-size:22px;line-height:22px;color:#000;">02/03/2021</span>
<span class="t sf" style="left:366.30px;top:373.00px;font-size:22px;line-height:22px;color:#000;transform:scaleX(1.0448);">Bàn phím S200</span>
<span class="t sf" style="left:747.62px;top:373.00px;font-size:22px;line-height:22px;color:#000;">61</span>
<div class="a" style="left:33.6px;top:428px;width:739px;height:1px;background:#9db5df;"></div>
<span class="t sf" style="left:37.00px;top:405.00px;font-size:22px;line-height:22px;color:#000;transform:scaleX(1.0365);">Bách</span>
<span class="t sf" style="left:220.40px;top:405.00px;font-size:22px;line-height:22px;color:#000;">18/04/2021</span>
<span class="t sf" style="left:366.30px;top:405.00px;font-size:22px;line-height:22px;color:#000;transform:scaleX(1.0461);">Màn hình máy tính LG30</span>
<span class="t sf" style="left:747.14px;top:405.00px;font-size:22px;line-height:22px;color:#000;">58</span>
<div class="a" style="left:33.6px;top:460px;width:739px;height:1px;background:#9db5df;"></div>
<span class="t sf" style="left:37.00px;top:437.00px;font-size:22px;line-height:22px;color:#000;transform:scaleX(1.0365);">Bách</span>
<span class="t sf" style="left:220.40px;top:437.00px;font-size:22px;line-height:22px;color:#000;">26/04/2021</span>
<span class="t sf" style="left:366.30px;top:437.00px;font-size:22px;line-height:22px;color:#000;transform:scaleX(1.0417);">Laptop Dell A60</span>
<span class="t sf" style="left:747.62px;top:437.00px;font-size:22px;line-height:22px;color:#000;">81</span>
<div class="a" style="left:33.6px;top:492px;width:739px;height:1px;background:#9db5df;"></div>
<span class="t sf" style="left:37.00px;top:469.00px;font-size:22px;line-height:22px;color:#000;transform:scaleX(1.0406);">Cường</span>
<span class="t sf" style="left:220.40px;top:469.00px;font-size:22px;line-height:22px;color:#000;">04/03/2021</span>
<span class="t sf" style="left:366.30px;top:469.00px;font-size:22px;line-height:22px;color:#000;transform:scaleX(1.0461);">Màn hình máy tính LG30</span>
<span class="t sf" style="left:747.62px;top:469.00px;font-size:22px;line-height:22px;color:#000;">71</span>
<div class="a" style="left:33.6px;top:524px;width:739px;height:1px;background:#9db5df;"></div>
<span class="t sf" style="left:37.00px;top:501.00px;font-size:22px;line-height:22px;color:#000;transform:scaleX(1.0601);">Trang</span>
<span class="t sf" style="left:220.40px;top:501.00px;font-size:22px;line-height:22px;color:#000;">15/05/2021</span>
<span class="t sf" style="left:366.30px;top:501.00px;font-size:22px;line-height:22px;color:#000;transform:scaleX(1.0362);">Laptop HP N100</span>
<span class="t sf" style="left:747.20px;top:501.00px;font-size:22px;line-height:22px;color:#000;">89</span>
<div class="a" style="left:33.6px;top:556px;width:739px;height:1px;background:#9db5df;"></div>
<span class="t sf" style="left:37.00px;top:533.00px;font-size:22px;line-height:22px;color:#000;transform:scaleX(1.0365);">Bách</span>
<span class="t sf" style="left:220.40px;top:533.00px;font-size:22px;line-height:22px;color:#000;">09/05/2021</span>
<span class="t sf" style="left:366.30px;top:533.00px;font-size:22px;line-height:22px;color:#000;transform:scaleX(1.0525);">Laptop Thinkpad D15</span>
<span class="t sf" style="left:746.96px;top:533.00px;font-size:22px;line-height:22px;color:#000;">26</span>
<div class="a" style="left:33.6px;top:588px;width:739px;height:1px;background:#9db5df;"></div>
<span class="t sf" style="left:37.00px;top:565.00px;font-size:22px;line-height:22px;color:#000;transform:scaleX(1.0365);">Bách</span>
<span class="t sf" style="left:220.40px;top:565.00px;font-size:22px;line-height:22px;color:#000;">15/05/2021</span>
<span class="t sf" style="left:366.30px;top:565.00px;font-size:22px;line-height:22px;color:#000;transform:scaleX(1.0362);">Laptop HP N100</span>
<span class="t sf" style="left:747.51px;top:565.00px;font-size:22px;line-height:22px;color:#000;">62</span>
<div class="a" style="left:33.6px;top:620px;width:739px;height:1px;background:#9db5df;"></div>
<span class="t sf" style="left:37.00px;top:597.00px;font-size:22px;line-height:22px;color:#000;transform:scaleX(1.0500);">Tùng</span>
<span class="t sf" style="left:220.40px;top:597.00px;font-size:22px;line-height:22px;color:#000;">18/05/2021</span>
<span class="t sf" style="left:366.30px;top:597.00px;font-size:22px;line-height:22px;color:#000;transform:scaleX(1.0627);">Sạc máy tính</span>
<span class="t sf" style="left:747.16px;top:597.00px;font-size:22px;line-height:22px;color:#000;">55</span>
<div class="a" style="left:33.6px;top:652px;width:739px;height:1px;background:#9db5df;"></div>
<span class="t sf" style="left:37.00px;top:629.00px;font-size:22px;line-height:22px;color:#000;transform:scaleX(1.0601);">Trang</span>
<span class="t sf" style="left:220.40px;top:629.00px;font-size:22px;line-height:22px;color:#000;">13/05/2021</span>
<span class="t sf" style="left:366.30px;top:629.00px;font-size:22px;line-height:22px;color:#000;transform:scaleX(1.0417);">Laptop Dell A60</span>
<span class="t sf" style="left:746.96px;top:629.00px;font-size:22px;line-height:22px;color:#000;">76</span>
<div class="a" style="left:33.6px;top:684px;width:739px;height:1px;background:#9db5df;"></div>
<span class="t sf" style="left:37.00px;top:661.00px;font-size:22px;line-height:22px;color:#000;transform:scaleX(1.0406);">Cường</span>
<span class="t sf" style="left:220.40px;top:661.00px;font-size:22px;line-height:22px;color:#000;">15/04/2021</span>
<span class="t sf" style="left:366.30px;top:661.00px;font-size:22px;line-height:22px;color:#000;transform:scaleX(1.0461);">Màn hình máy tính LG30</span>
<span class="t sf" style="left:747.62px;top:661.00px;font-size:22px;line-height:22px;color:#000;">91</span>
<div class="a" style="left:33.6px;top:716px;width:739px;height:1px;background:#9db5df;"></div>
<span class="t sf" style="left:37.00px;top:693.00px;font-size:22px;line-height:22px;color:#000;transform:scaleX(1.0365);">Bách</span>
<span class="t sf" style="left:220.40px;top:693.00px;font-size:22px;line-height:22px;color:#000;">13/05/2021</span>
<span class="t sf" style="left:366.30px;top:693.00px;font-size:22px;line-height:22px;color:#000;transform:scaleX(1.0448);">Bàn phím S200</span>
<span class="t sf" style="left:747.16px;top:693.00px;font-size:22px;line-height:22px;color:#000;">75</span>
<span class="t sf" style="left:1111.29px;top:35.00px;font-size:30px;line-height:30px;color:#44546a;letter-spacing:0.656px;">Báo cáo bán hàng</span>
<span class="t sf" style="left:1047.75px;top:80.00px;font-size:25px;line-height:25px;color:#000;letter-spacing:-0.067px;">Tháng:</span>
<div class="a" style="left:1126px;top:72.30000000000001px;width:153.3px;height:36.4px;background:#c6efce;"></div>
<span class="t sf" style="left:1195.51px;top:80.00px;font-size:25px;line-height:25px;color:#006100;">5</span>
<div class="a" style="left:1126px;top:140px;width:460px;height:33px;background:#4472c4;"></div>
<span class="t sf" style="left:1305.28px;top:144.00px;font-size:25px;line-height:25px;color:#fff;letter-spacing:-0.043px;">Nhân viên</span>
<div class="a" style="left:860px;top:173px;width:725px;height:32px;background:#d9e1f2;"></div>
<div class="a" style="left:1126px;top:205px;width:459.5px;height:320px;background:#f2f2f2;"></div>
<div class="a" style="left:860px;top:172px;width:726px;height:1px;background:#4472c4;"></div>
<div class="a" style="left:860px;top:204px;width:726px;height:1px;background:#4472c4;"></div>
<div class="a" style="left:860px;top:236px;width:726px;height:1px;background:#4472c4;"></div>
<div class="a" style="left:860px;top:268px;width:726px;height:1px;background:#4472c4;"></div>
<div class="a" style="left:860px;top:300px;width:726px;height:1px;background:#4472c4;"></div>
<div class="a" style="left:860px;top:332px;width:726px;height:1px;background:#4472c4;"></div>
<div class="a" style="left:860px;top:364px;width:726px;height:1px;background:#4472c4;"></div>
<div class="a" style="left:860px;top:396px;width:726px;height:1px;background:#4472c4;"></div>
<div class="a" style="left:860px;top:428px;width:726px;height:1px;background:#4472c4;"></div>
<div class="a" style="left:860px;top:460px;width:726px;height:1px;background:#4472c4;"></div>
<div class="a" style="left:860px;top:492px;width:726px;height:1px;background:#4472c4;"></div>
<div class="a" style="left:860px;top:524px;width:726px;height:1px;background:#4472c4;"></div>
<div class="a" style="left:860px;top:172px;width:1px;height:353px;background:#4472c4;"></div>
<div class="a" style="left:1126px;top:172px;width:1px;height:353px;background:#4472c4;"></div>
<div class="a" style="left:1279px;top:172px;width:1px;height:353px;background:#4472c4;"></div>
<div class="a" style="left:1432px;top:172px;width:1px;height:353px;background:#4472c4;"></div>
<div class="a" style="left:1585px;top:172px;width:1px;height:353px;background:#4472c4;"></div>
<span class="t sf" style="left:863.15px;top:181.00px;font-size:22px;line-height:22px;color:#44546a;transform:scaleX(1.0685);font-weight:700;">Sản phẩm</span>
<span class="t sf" style="left:1206.64px;top:181.00px;font-size:22px;line-height:22px;color:#44546a;transform:scaleX(1.0756);font-weight:700;">Cường</span>
<span class="t sf" style="left:1377.51px;top:181.00px;font-size:22px;line-height:22px;color:#44546a;transform:scaleX(1.0686);font-weight:700;">Bách</span>
<span class="t sf" style="left:1520.03px;top:181.00px;font-size:22px;line-height:22px;color:#44546a;transform:scaleX(1.0870);font-weight:700;">Trang</span>
<span class="t sf" style="left:863.50px;top:213.00px;font-size:22px;line-height:22px;color:#000;transform:scaleX(1.0415);">Bàn phím cơ C800</span>
<span class="t sf" style="left:1265.34px;top:213.00px;font-size:22px;line-height:22px;color:#4472c4;">0</span>
<span class="t sf" style="left:1418.24px;top:213.00px;font-size:22px;line-height:22px;color:#4472c4;">0</span>
<span class="t sf" style="left:1571.44px;top:213.00px;font-size:22px;line-height:22px;color:#4472c4;">0</span>
<span class="t sf" style="left:863.50px;top:245.00px;font-size:22px;line-height:22px;color:#000;transform:scaleX(1.0425);">Bàn phím cơ S1000</span>
<span class="t sf" style="left:1265.34px;top:245.00px;font-size:22px;line-height:22px;color:#4472c4;">0</span>
<span class="t sf" style="left:1418.24px;top:245.00px;font-size:22px;line-height:22px;color:#4472c4;">0</span>
<span class="t sf" style="left:1571.44px;top:245.00px;font-size:22px;line-height:22px;color:#4472c4;">0</span>
<span class="t sf" style="left:863.50px;top:277.00px;font-size:22px;line-height:22px;color:#000;transform:scaleX(1.0448);">Bàn phím S200</span>
<span class="t sf" style="left:1265.34px;top:277.00px;font-size:22px;line-height:22px;color:#4472c4;">0</span>
<span class="t sf" style="left:1418.24px;top:277.00px;font-size:22px;line-height:22px;color:#4472c4;">0</span>
<span class="t sf" style="left:1571.44px;top:277.00px;font-size:22px;line-height:22px;color:#4472c4;">0</span>
<span class="t sf" style="left:863.50px;top:309.00px;font-size:22px;line-height:22px;color:#000;transform:scaleX(1.0494);">Chuột máy tính K1</span>
<span class="t sf" style="left:1265.34px;top:309.00px;font-size:22px;line-height:22px;color:#4472c4;">0</span>
<span class="t sf" style="left:1418.24px;top:309.00px;font-size:22px;line-height:22px;color:#4472c4;">0</span>
<span class="t sf" style="left:1571.44px;top:309.00px;font-size:22px;line-height:22px;color:#4472c4;">0</span>
<span class="t sf" style="left:863.50px;top:341.00px;font-size:22px;line-height:22px;color:#000;transform:scaleX(1.0559);">Chuột máy tính K2</span>
<span class="t sf" style="left:1265.34px;top:341.00px;font-size:22px;line-height:22px;color:#4472c4;">0</span>
<span class="t sf" style="left:1418.24px;top:341.00px;font-size:22px;line-height:22px;color:#4472c4;">0</span>
<span class="t sf" style="left:1571.44px;top:341.00px;font-size:22px;line-height:22px;color:#4472c4;">0</span>
<span class="t sf" style="left:863.50px;top:373.00px;font-size:22px;line-height:22px;color:#000;transform:scaleX(1.0417);">Laptop Dell A60</span>
<span class="t sf" style="left:1265.34px;top:373.00px;font-size:22px;line-height:22px;color:#4472c4;">0</span>
<span class="t sf" style="left:1418.24px;top:373.00px;font-size:22px;line-height:22px;color:#4472c4;">0</span>
<span class="t sf" style="left:1571.44px;top:373.00px;font-size:22px;line-height:22px;color:#4472c4;">0</span>
<span class="t sf" style="left:863.50px;top:405.00px;font-size:22px;line-height:22px;color:#000;transform:scaleX(1.0362);">Laptop HP N100</span>
<span class="t sf" style="left:1265.34px;top:405.00px;font-size:22px;line-height:22px;color:#4472c4;">0</span>
<span class="t sf" style="left:1418.24px;top:405.00px;font-size:22px;line-height:22px;color:#4472c4;">0</span>
<span class="t sf" style="left:1571.44px;top:405.00px;font-size:22px;line-height:22px;color:#4472c4;">0</span>
<span class="t sf" style="left:863.50px;top:437.00px;font-size:22px;line-height:22px;color:#000;transform:scaleX(1.0525);">Laptop Thinkpad D15</span>
<span class="t sf" style="left:1265.34px;top:437.00px;font-size:22px;line-height:22px;color:#4472c4;">0</span>
<span class="t sf" style="left:1418.24px;top:437.00px;font-size:22px;line-height:22px;color:#4472c4;">0</span>
<span class="t sf" style="left:1571.44px;top:437.00px;font-size:22px;line-height:22px;color:#4472c4;">0</span>
<span class="t sf" style="left:863.50px;top:469.00px;font-size:22px;line-height:22px;color:#000;transform:scaleX(1.0461);">Màn hình máy tính LG30</span>
<span class="t sf" style="left:1265.34px;top:469.00px;font-size:22px;line-height:22px;color:#4472c4;">0</span>
<span class="t sf" style="left:1418.24px;top:469.00px;font-size:22px;line-height:22px;color:#4472c4;">0</span>
<span class="t sf" style="left:1571.44px;top:469.00px;font-size:22px;line-height:22px;color:#4472c4;">0</span>
<span class="t sf" style="left:863.50px;top:501.00px;font-size:22px;line-height:22px;color:#000;transform:scaleX(1.0627);">Sạc máy tính</span>
<span class="t sf" style="left:1265.34px;top:501.00px;font-size:22px;line-height:22px;color:#4472c4;">0</span>
<span class="t sf" style="left:1418.24px;top:501.00px;font-size:22px;line-height:22px;color:#4472c4;">0</span>
<span class="t sf" style="left:1571.44px;top:501.00px;font-size:22px;line-height:22px;color:#4472c4;">0</span></div>
<div class="a" style="left:1886.3px;top:382px;width:1.2px;height:675px;background:#a6a6a6;"></div>
<div class="a" style="left:1887.5px;top:357px;width:28.5px;height:700px;background:#e6e6e6;"></div>
<div class="a" style="left:1889px;top:383px;width:25px;height:651px;background:#f3f3f3;"></div>
<div class="a" style="left:1889px;top:358px;width:25px;height:25px;background:#fff;border:1px solid #ababab;background:#fff;box-sizing:border-box;"></div>
<svg class="a" style="left:1895.5px;top:366.5px;" width="12" height="7" viewBox="0 0 12 7"><path d="M0 6.5 L5.7 0.5 L11.4 6.5 Z" fill="#222"/></svg>
<div class="a" style="left:1889px;top:383.5px;width:25px;height:545.5px;background:#fff;border:1px solid #ababab;background:#fff;box-sizing:border-box;"></div>
<div class="a" style="left:1889px;top:1033.5px;width:25px;height:24.5px;background:#fff;border:1px solid #ababab;background:#fff;box-sizing:border-box;"></div>
<svg class="a" style="left:1895.5px;top:1042.5px;" width="12" height="7" viewBox="0 0 12 7"><path d="M0 0.5 H11.4 L5.7 6.5 Z" fill="#222"/></svg>
<div class="a" style="left:0px;top:1056px;width:1916px;height:40px;background:#e6e6e6;"></div>
<div class="a" style="left:0px;top:1055.6px;width:1887.5px;height:1.2px;background:#a6a6a6;"></div>
<div class="a" style="left:0px;top:1095px;width:1916px;height:6px;background:#f3f3f3;"></div>
<div class="a" style="left:0px;top:1095px;width:1916px;height:1px;background:#d6d6d6;"></div>
<div class="a" style="left:1480px;top:1096px;width:59.5px;height:5px;background:#c8c8c8;"></div>
<div class="a" style="left:214px;top:1056px;width:81px;height:33px;background:#fff;border-left:1px solid #b8b8b8;border-right:1px solid #b8b8b8;box-sizing:border-box;"></div>
<div class="a" style="left:214px;top:1088.8px;width:81px;height:2.7px;background:#217346;"></div>
<div class="a" style="left:130px;top:1060.3px;width:1px;height:30px;background:#ababab;"></div>
<div class="a" style="left:387px;top:1060.3px;width:1px;height:30px;background:#ababab;"></div>
<svg class="a" style="left:28px;top:1069px;" width="8" height="13" viewBox="0 0 8 13"><path d="M6.5 0.5 V12.5 L0.8 6.5 Z" fill="#c3c3c3"/></svg>
<svg class="a" style="left:68px;top:1069px;" width="8" height="13" viewBox="0 0 8 13"><path d="M1 0.5 V12.5 L6.7 6.5 Z" fill="#c3c3c3"/></svg>
<span class="t" style="left:142.28px;top:1067.00px;font-size:18.8px;line-height:18.8px;color:#444;transform:scaleX(1.0504);">MENU</span>
<span class="t" style="left:225.76px;top:1067.00px;font-size:18.8px;line-height:18.8px;color:#217346;transform:scaleX(1.0671);font-weight:700;">DeBai</span>
<span class="t" style="left:307.24px;top:1067.00px;font-size:18.8px;line-height:18.8px;color:#444;transform:scaleX(1.0127);">KetQua</span>
<svg class="a" style="left:435px;top:1064.7px;" width="22" height="22" viewBox="0 0 22 22"><circle cx="11" cy="11" r="10.1" fill="none" stroke="#6a6a6a" stroke-width="1.3"/><path d="M5.5 11 H16.5 M11 5.5 V16.5" stroke="#6a6a6a" stroke-width="1.5"/></svg>
<div class="a" style="left:1147px;top:1067px;width:3px;height:3px;background:#b2b2b2;"></div>
<div class="a" style="left:1147px;top:1074px;width:3px;height:3px;background:#b2b2b2;"></div>
<div class="a" style="left:1147px;top:1081px;width:3px;height:3px;background:#b2b2b2;"></div>
<div class="a" style="left:1194px;top:1063.3px;width:669px;height:24.5px;background:#f3f3f3;"></div>
<div class="a" style="left:1170px;top:1063.3px;width:25px;height:24.5px;background:#fff;border:1px solid #ababab;background:#fff;box-sizing:border-box;"></div>
<svg class="a" style="left:1178.5px;top:1069.5px;" width="7" height="12" viewBox="0 0 7 12"><path d="M6.5 0.3 V11.7 L0.5 6 Z" fill="#222"/></svg>
<div class="a" style="left:1194px;top:1063.3px;width:617px;height:24.5px;background:#fff;border:1px solid #ababab;background:#fff;box-sizing:border-box;"></div>
<div class="a" style="left:1863px;top:1063.3px;width:25px;height:24.5px;background:#fff;border:1px solid #ababab;background:#fff;box-sizing:border-box;"></div>
<svg class="a" style="left:1872.5px;top:1069.5px;" width="7" height="12" viewBox="0 0 7 12"><path d="M0.5 0.3 V11.7 L6.5 6 Z" fill="#222"/></svg>
</div></body></html>
